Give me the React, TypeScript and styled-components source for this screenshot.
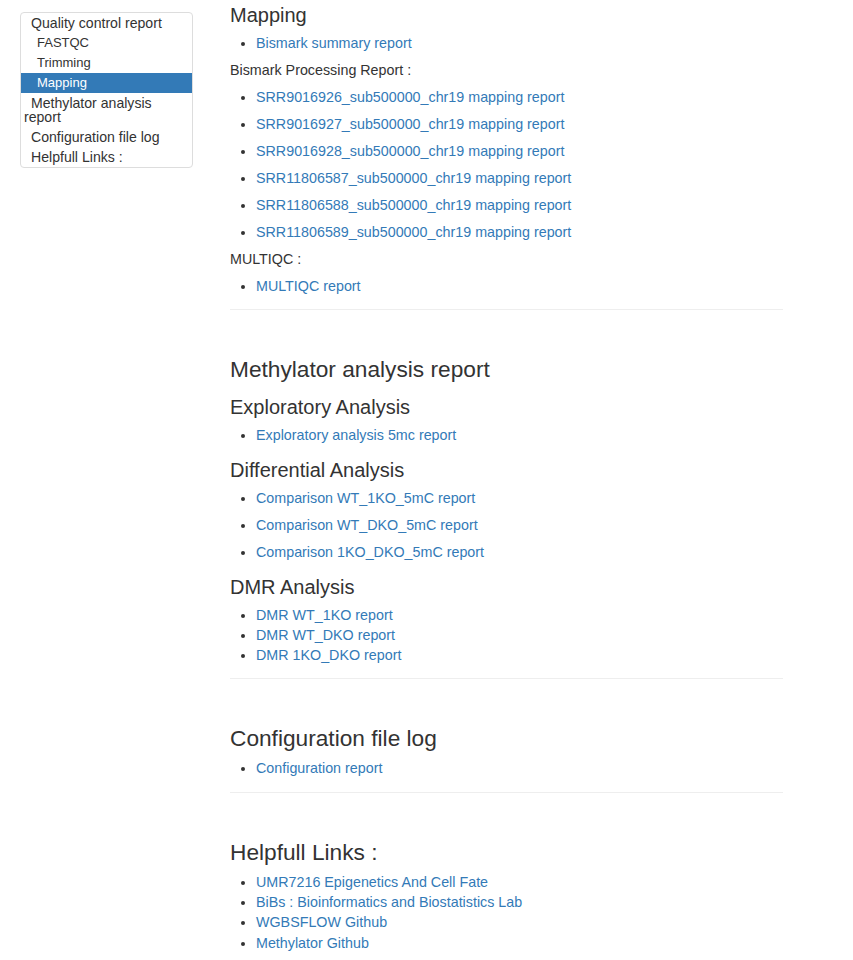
import React from 'react'
import styled, { createGlobalStyle } from 'styled-components'

const GlobalStyle = createGlobalStyle`
  html, body {
    margin: 0;
    padding: 0;
    background: #fff;
  }
  body {
    font-family: "Liberation Sans", Arial, Helvetica, sans-serif;
    font-size: 14.3px;
    color: #333;
  }
`

const Page = styled.div`
  display: flex;
  align-items: flex-start;
`

const Toc = styled.nav`
  width: 171px;
  margin: 12px 0 0 20px;
  border: 1px solid #ddd;
  border-radius: 4px;
  overflow: hidden;
  flex-shrink: 0;
`

const TocItem = styled.div<{ $sub?: boolean; $active?: boolean }>`
  padding: 3px 6px 3px 3px;
  text-indent: ${(p) => (p.$sub ? '13px' : '7px')};
  font-size: ${(p) => (p.$sub ? '13px' : '14.1px')};
  line-height: 14px;
  color: ${(p) => (p.$active ? '#fff' : '#333')};
  background: ${(p) => (p.$active ? '#337ab7' : 'transparent')};
`

const Main = styled.main`
  width: 553px;
  margin: 4px 0 0 37px;
`

const SectionTitle = styled.h2`
  font-size: 22.7px;
  font-weight: 400;
  line-height: 25px;
  margin: 47px 0 7px;
  color: #333;
`

const SubTitle = styled.h3<{ $first?: boolean }>`
  font-size: 20px;
  font-weight: 400;
  line-height: 22px;
  margin: ${(p) => (p.$first ? '0' : '14.5px')} 0 6.5px;
  color: #333;
`

const Para = styled.p`
  margin: 0 0 7px;
  line-height: 20px;
`

const List = styled.ul<{ $loose?: boolean }>`
  margin: 0 0 7px;
  padding-left: 26px;
  list-style: disc;

  li {
    line-height: ${(p) => (p.$loose ? '20px' : '20.3px')};
    margin-bottom: ${(p) => (p.$loose ? '7px' : '0')};
  }
  li:last-child {
    margin-bottom: 0;
  }
`

const Link = styled.a`
  color: #337ab7;
  text-decoration: none;
`

const Rule = styled.hr`
  margin: 13px 0 0;
  border: 0;
  border-top: 1px solid #eee;
`

const links = (items: string[], loose = false) => (
  <List $loose={loose}>
    {items.map((t) => (
      <li key={t}>
        <Link href="#">{t}</Link>
      </li>
    ))}
  </List>
)

export default function App() {
  return (
    <>
      <GlobalStyle />
      <Page>
        <Toc>
          <TocItem>Quality control report</TocItem>
          <TocItem $sub>FASTQC</TocItem>
          <TocItem $sub>Trimming</TocItem>
          <TocItem $sub $active>Mapping</TocItem>
          <TocItem>Methylator analysis report</TocItem>
          <TocItem>Configuration file log</TocItem>
          <TocItem>Helpfull Links :</TocItem>
        </Toc>

        <Main>
          <SubTitle $first>Mapping</SubTitle>
          {links(['Bismark summary report'], true)}
          <Para>Bismark Processing Report :</Para>
          {links(
            [
              'SRR9016926_sub500000_chr19 mapping report',
              'SRR9016927_sub500000_chr19 mapping report',
              'SRR9016928_sub500000_chr19 mapping report',
              'SRR11806587_sub500000_chr19 mapping report',
              'SRR11806588_sub500000_chr19 mapping report',
              'SRR11806589_sub500000_chr19 mapping report',
            ],
            true
          )}
          <Para>MULTIQC :</Para>
          {links(['MULTIQC report'], true)}
          <Rule />

          <SectionTitle>Methylator analysis report</SectionTitle>
          <SubTitle>Exploratory Analysis</SubTitle>
          {links(['Exploratory analysis 5mc report'], true)}
          <SubTitle>Differential Analysis</SubTitle>
          {links(
            [
              'Comparison WT_1KO_5mC report',
              'Comparison WT_DKO_5mC report',
              'Comparison 1KO_DKO_5mC report',
            ],
            true
          )}
          <SubTitle>DMR Analysis</SubTitle>
          {links(['DMR WT_1KO report', 'DMR WT_DKO report', 'DMR 1KO_DKO report'])}
          <Rule />

          <SectionTitle>Configuration file log</SectionTitle>
          {links(['Configuration report'])}
          <Rule />

          <SectionTitle>Helpfull Links :</SectionTitle>
          {links([
            'UMR7216 Epigenetics And Cell Fate',
            'BiBs : Bioinformatics and Biostatistics Lab',
            'WGBSFLOW Github',
            'Methylator Github',
          ])}
        </Main>
      </Page>
    </>
  )
}
